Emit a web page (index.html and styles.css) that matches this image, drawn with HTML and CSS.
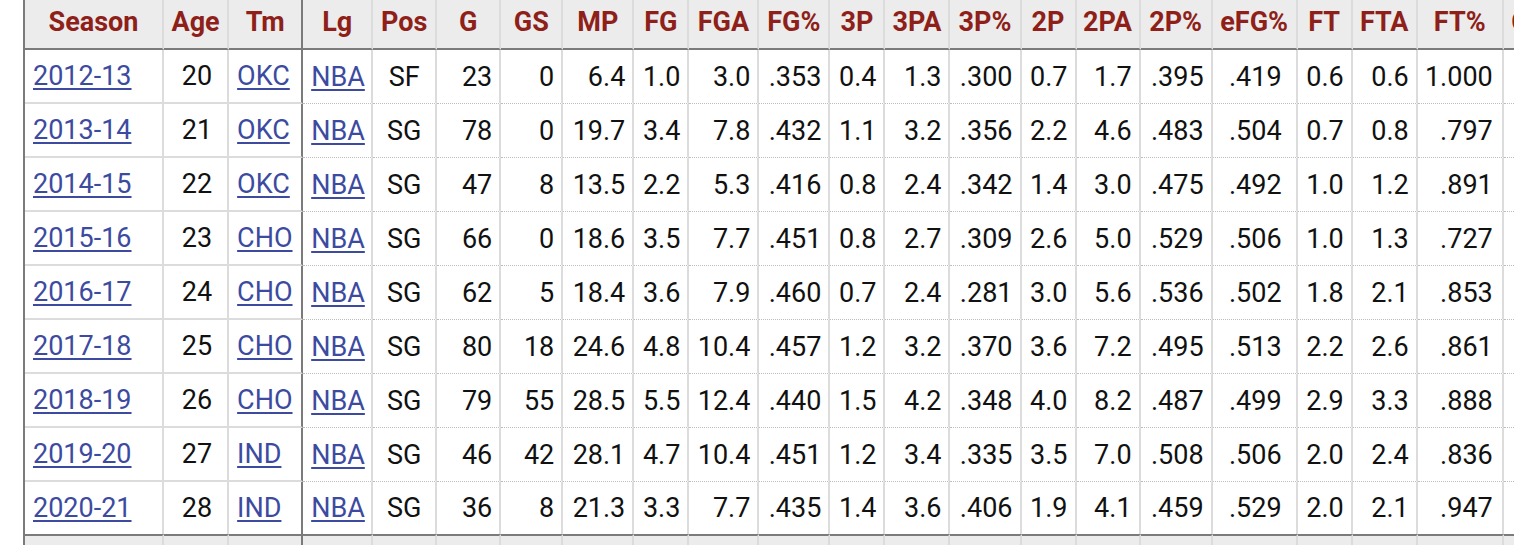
FILE: index.html
```html
<!DOCTYPE html>
<html lang="en">
<head>
<meta charset="utf-8">
<title>Per Game</title>
<link rel="stylesheet" href="styles.css">
</head>
<body>
<div class="wrap">
<table class="stats">
<colgroup>
<col class="w-season"><col class="w-age"><col class="w-tm"><col class="w-lg"><col class="w-pos"><col class="w-g"><col class="w-gs"><col class="w-mp"><col class="w-fg"><col class="w-fga"><col class="w-fgp"><col class="w-3p"><col class="w-3pa"><col class="w-3pp"><col class="w-2p"><col class="w-2pa"><col class="w-2pp"><col class="w-efg"><col class="w-ft"><col class="w-fta"><col class="w-ftp"><col class="w-orb">
</colgroup>
<thead>
<tr>
<th class="fz">Season</th><th class="fz">Age</th><th class="fz last">Tm</th><th>Lg</th><th>Pos</th><th>G</th><th>GS</th><th>MP</th><th>FG</th><th>FGA</th><th>FG%</th><th>3P</th><th>3PA</th><th>3P%</th><th>2P</th><th>2PA</th><th>2P%</th><th>eFG%</th><th>FT</th><th>FTA</th><th>FT%</th><th>ORB</th>
</tr>
</thead>
<tbody>
<tr><td class="fz l"><a href="#">2012-13</a></td><td class="fz age">20</td><td class="fz last l"><a href="#">OKC</a></td><td class="l"><a href="#">NBA</a></td><td class="c">SF</td><td>23</td><td>0</td><td>6.4</td><td>1.0</td><td>3.0</td><td>.353</td><td>0.4</td><td>1.3</td><td>.300</td><td>0.7</td><td>1.7</td><td>.395</td><td class="efg">.419</td><td>0.6</td><td>0.6</td><td class="ftp">1.000</td><td></td></tr>
<tr><td class="fz l"><a href="#">2013-14</a></td><td class="fz age">21</td><td class="fz last l"><a href="#">OKC</a></td><td class="l"><a href="#">NBA</a></td><td class="c">SG</td><td>78</td><td>0</td><td>19.7</td><td>3.4</td><td>7.8</td><td>.432</td><td>1.1</td><td>3.2</td><td>.356</td><td>2.2</td><td>4.6</td><td>.483</td><td class="efg">.504</td><td>0.7</td><td>0.8</td><td class="ftp">.797</td><td></td></tr>
<tr><td class="fz l"><a href="#">2014-15</a></td><td class="fz age">22</td><td class="fz last l"><a href="#">OKC</a></td><td class="l"><a href="#">NBA</a></td><td class="c">SG</td><td>47</td><td>8</td><td>13.5</td><td>2.2</td><td>5.3</td><td>.416</td><td>0.8</td><td>2.4</td><td>.342</td><td>1.4</td><td>3.0</td><td>.475</td><td class="efg">.492</td><td>1.0</td><td>1.2</td><td class="ftp">.891</td><td></td></tr>
<tr><td class="fz l"><a href="#">2015-16</a></td><td class="fz age">23</td><td class="fz last l"><a href="#">CHO</a></td><td class="l"><a href="#">NBA</a></td><td class="c">SG</td><td>66</td><td>0</td><td>18.6</td><td>3.5</td><td>7.7</td><td>.451</td><td>0.8</td><td>2.7</td><td>.309</td><td>2.6</td><td>5.0</td><td>.529</td><td class="efg">.506</td><td>1.0</td><td>1.3</td><td class="ftp">.727</td><td></td></tr>
<tr><td class="fz l"><a href="#">2016-17</a></td><td class="fz age">24</td><td class="fz last l"><a href="#">CHO</a></td><td class="l"><a href="#">NBA</a></td><td class="c">SG</td><td>62</td><td>5</td><td>18.4</td><td>3.6</td><td>7.9</td><td>.460</td><td>0.7</td><td>2.4</td><td>.281</td><td>3.0</td><td>5.6</td><td>.536</td><td class="efg">.502</td><td>1.8</td><td>2.1</td><td class="ftp">.853</td><td></td></tr>
<tr><td class="fz l"><a href="#">2017-18</a></td><td class="fz age">25</td><td class="fz last l"><a href="#">CHO</a></td><td class="l"><a href="#">NBA</a></td><td class="c">SG</td><td>80</td><td>18</td><td>24.6</td><td>4.8</td><td>10.4</td><td>.457</td><td>1.2</td><td>3.2</td><td>.370</td><td>3.6</td><td>7.2</td><td>.495</td><td class="efg">.513</td><td>2.2</td><td>2.6</td><td class="ftp">.861</td><td></td></tr>
<tr><td class="fz l"><a href="#">2018-19</a></td><td class="fz age">26</td><td class="fz last l"><a href="#">CHO</a></td><td class="l"><a href="#">NBA</a></td><td class="c">SG</td><td>79</td><td>55</td><td>28.5</td><td>5.5</td><td>12.4</td><td>.440</td><td>1.5</td><td>4.2</td><td>.348</td><td>4.0</td><td>8.2</td><td>.487</td><td class="efg">.499</td><td>2.9</td><td>3.3</td><td class="ftp">.888</td><td></td></tr>
<tr><td class="fz l"><a href="#">2019-20</a></td><td class="fz age">27</td><td class="fz last l"><a href="#">IND</a></td><td class="l"><a href="#">NBA</a></td><td class="c">SG</td><td>46</td><td>42</td><td>28.1</td><td>4.7</td><td>10.4</td><td>.451</td><td>1.2</td><td>3.4</td><td>.335</td><td>3.5</td><td>7.0</td><td>.508</td><td class="efg">.506</td><td>2.0</td><td>2.4</td><td class="ftp">.836</td><td></td></tr>
<tr class="endrow"><td class="fz l"><a href="#">2020-21</a></td><td class="fz age">28</td><td class="fz last l"><a href="#">IND</a></td><td class="l"><a href="#">NBA</a></td><td class="c">SG</td><td>36</td><td>8</td><td>21.3</td><td>3.3</td><td>7.7</td><td>.435</td><td>1.4</td><td>3.6</td><td>.406</td><td>1.9</td><td>4.1</td><td>.459</td><td class="efg">.529</td><td>2.0</td><td>2.1</td><td class="ftp">.947</td><td></td></tr>
</tbody>
<tfoot>
<tr><td class="fz"></td><td class="fz"></td><td class="fz last"></td><td></td><td></td><td></td><td></td><td></td><td></td><td></td><td></td><td></td><td></td><td></td><td></td><td></td><td></td><td></td><td></td><td></td><td></td><td></td></tr>
</tfoot>
</table>
</div>
</body>
</html>
```
FILE: styles.css
```css
html, body {
  margin: 0;
  padding: 0;
  background: #fff;
}

body {
  font-family: Roboto, "Liberation Sans", sans-serif;
  font-size: 27px;
  color: #111;
}

.wrap {
  margin-left: 23px;
  width: 1489px;
  overflow: hidden;
  border-left: 2px solid #7b7b7b;
}

.stats {
  border-collapse: separate;
  border-spacing: 0;
  table-layout: fixed;
  width: 1549px;
}

.w-season { width: 139px; }
.w-age { width: 65px; }
.w-tm { width: 74px; }
.w-lg { width: 70px; }
.w-pos { width: 64px; }
.w-g { width: 64px; }
.w-gs { width: 62px; }
.w-mp { width: 71px; }
.w-fg { width: 55px; }
.w-fga { width: 70px; }
.w-fgp { width: 71px; }
.w-3p { width: 55px; }
.w-3pa { width: 65px; }
.w-3pp { width: 71px; }
.w-2p { width: 55px; }
.w-2pa { width: 64px; }
.w-2pp { width: 72px; }
.w-efg { width: 85px; }
.w-ft { width: 55px; }
.w-fta { width: 65px; }
.w-ftp { width: 86px; }
.w-orb { width: 70px; }

.stats th,
.stats td {
  box-sizing: border-box;
  border-right: 2px solid #dcdcdc;
  white-space: nowrap;
  overflow: hidden;
}

.stats th {
  height: 50px;
  padding: 0 0 4px;
  background: #ececec;
  color: #8e1f19;
  font-weight: 700;
  text-align: center;
  border-bottom: 2px solid #7b7b7b;
}

.stats th.orb {
  text-align: left;
}

.stats td {
  height: 54px;
  padding: 0 7px 0 4px;
  text-align: right;
  vertical-align: middle;
  border-bottom: 1px dotted #bdbdbd;
}

.stats td.fz {
  border-bottom: 2px solid #dcdcdc;
}

.stats td.l {
  text-align: left;
  padding-left: 8px;
}

.stats td.c {
  text-align: center;
  padding: 0;
}

.stats td.age {
  padding-right: 15px;
}

.stats td.efg {
  padding-right: 14px;
}

.stats td.ftp {
  padding-right: 9px;
}

.stats th.last,
.stats td.last {
  border-right-color: #7b7b7b;
}

.stats .endrow td {
  border-bottom: 0;
  height: 52px;
}

.stats tfoot td {
  background: #ececec;
  border-top: 2px solid #7b7b7b;
  border-bottom: 0;
  height: 54px;
}

.stats a {
  color: #3c4ba0;
  text-decoration: underline;
  text-underline-offset: 3px;
  text-decoration-thickness: 2px;
}
```
